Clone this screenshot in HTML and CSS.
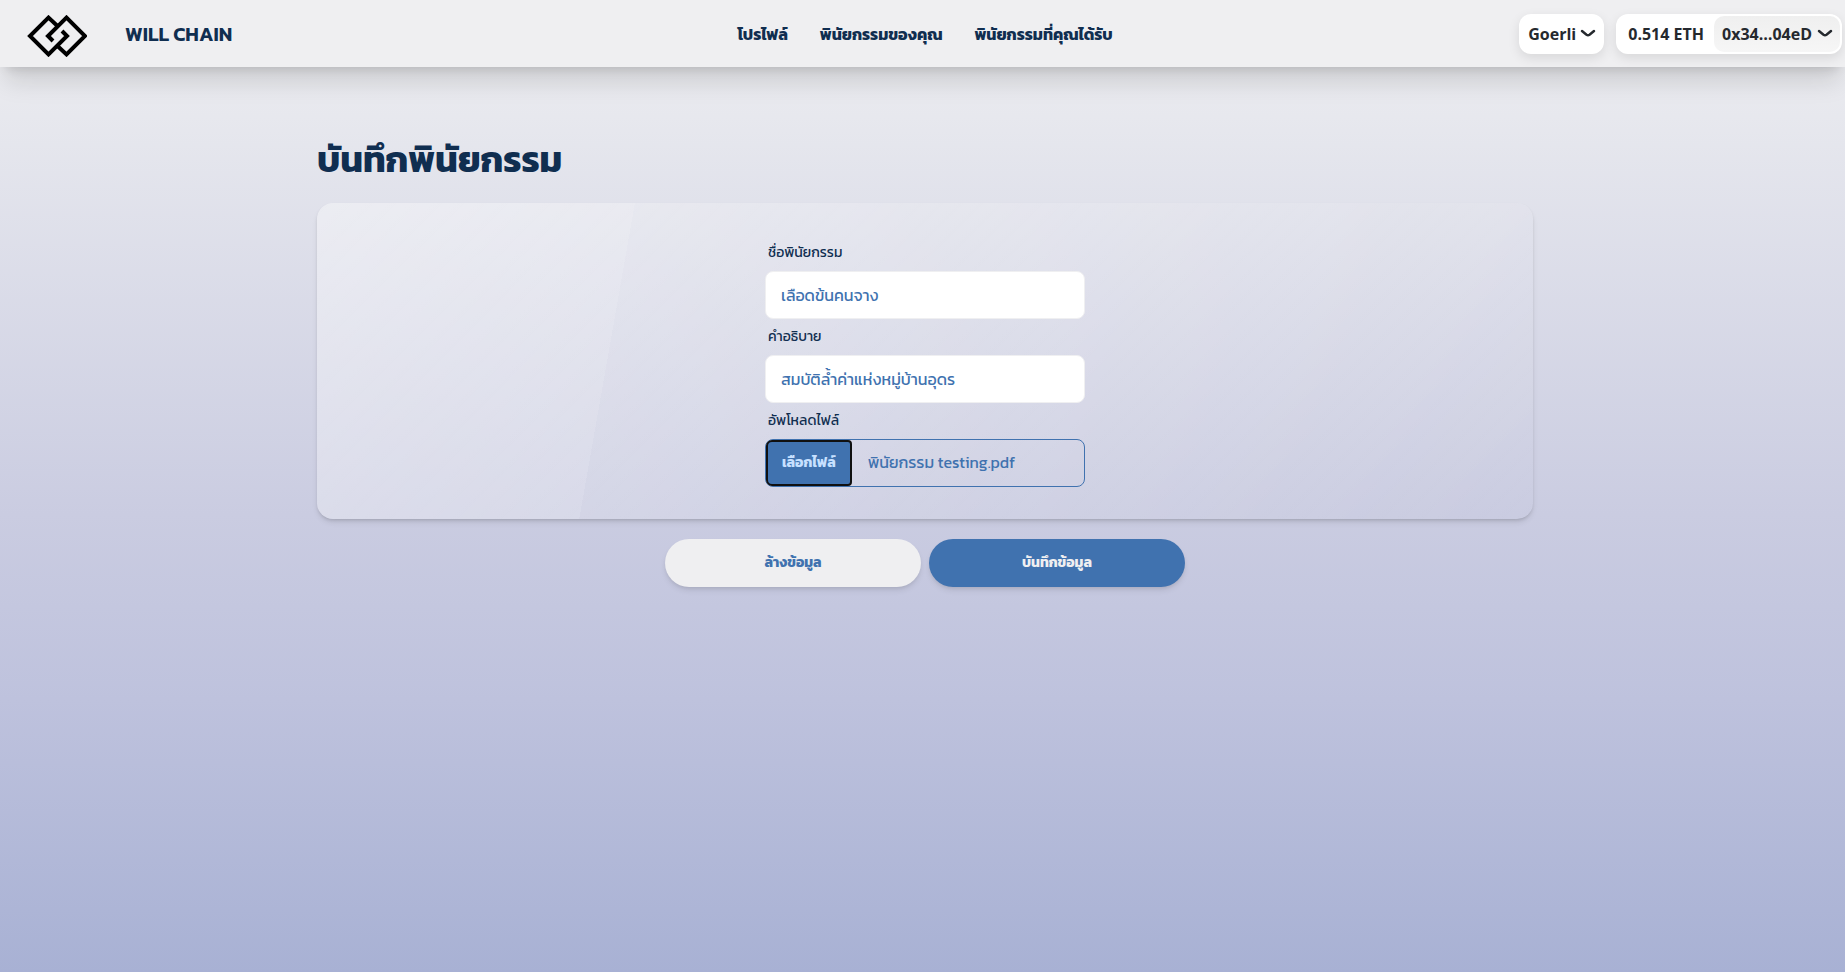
FILE: index.html
```html
<!DOCTYPE html>
<html lang="th">
<head>
<meta charset="utf-8">
<meta name="viewport" content="width=device-width, initial-scale=1">
<title>WILL CHAIN</title>
<link rel="stylesheet" href="styles.css">
</head>
<body>
<header class="navbar">
  <a class="brand" href="#">
    <svg class="logo" viewBox="0 0 60 42" aria-hidden="true">
      <path d="M31 11.5 21.500 2.600 3 21 21.500 39.400 40 21 35 16"/>
      <path d="M30 30.500 39.500 39.400 58 21 39.500 2.600 21 21 26 26"/>
    </svg>
    <span class="brand-name">WILL CHAIN</span>
  </a>
  <nav class="menu">
    <a href="#">โปรไฟล์</a>
    <a href="#">พินัยกรรมของคุณ</a>
    <a href="#">พินัยกรรมที่คุณได้รับ</a>
  </nav>
  <div class="wallet">
    <button class="pill chain" type="button">Goerli
      <svg class="chevron" viewBox="0 0 14 7" aria-hidden="true"><path d="M1 1 5.500 4.700Q7 5.700 8.500 4.700L13 1"/></svg>
    </button>
    <div class="pill account">
      <span class="balance">0.514 ETH</span>
      <button class="address" type="button">0x34…04eD
        <svg class="chevron" viewBox="0 0 14 7" aria-hidden="true"><path d="M1 1 5.500 4.700Q7 5.700 8.500 4.700L13 1"/></svg>
      </button>
    </div>
  </div>
</header>
<main class="page">
  <h1>บันทึกพินัยกรรม</h1>
  <form>
    <div class="card">
      <div class="fields">
        <label for="name">ชื่อพินัยกรรม</label>
        <input class="text" id="name" type="text" value="เลือดข้นคนจาง">
        <label for="description">คำอธิบาย</label>
        <input class="text" id="description" type="text" value="สมบัติล้ำค่าแห่งหมู่บ้านอุดร">
        <label for="file">อัพโหลดไฟล์</label>
        <div class="file">
          <input class="file-input" id="file" type="file">
          <button class="file-button" type="button">เลือกไฟล์</button>
          <span class="file-name">พินัยกรรม testing.pdf</span>
        </div>
      </div>
    </div>
    <div class="actions">
      <button class="btn reset" type="reset">ล้างข้อมูล</button>
      <button class="btn save" type="submit">บันทึกข้อมูล</button>
    </div>
  </form>
</main>
</body>
</html>
```
FILE: styles.css
```css
* { box-sizing: border-box; }

body {
  margin: 0;
  min-height: 100vh;
  background: linear-gradient(#efeff0 0%, #e7e8ee 12%, #cacce1 53%, #bec2dd 72%, #a8b1d4 100%);
  color: #102e50;
  font-family: Kanit, "Noto Sans Thai", "Noto Sans", sans-serif;
  font-size: 14px;
}

a { color: inherit; text-decoration: none; }
button, input { font: inherit; }
button { cursor: pointer; }

.navbar {
  display: grid;
  grid-template-columns: 1fr auto 1fr;
  align-items: center;
  height: 67px;
  padding-left: 5px;
  background: #efeff1;
  box-shadow: 0 20px 25px -5px rgb(0 0 0 / 12%), 0 8px 10px -6px rgb(0 0 0 / 12%);
}

.brand { display: flex; align-items: center; gap: 38px; padding: 4px 0 0 22px; }
.logo { width: 60px; height: 42px; fill: none; stroke: #000; stroke-width: 4; }
.brand-name { padding-bottom: 4px; font-size: 20px; font-weight: 600; }

.menu { display: flex; gap: 32px; font-size: 16px; font-weight: 700; }

.wallet {
  display: flex;
  justify-content: flex-end;
  gap: 12px;
  padding-right: 3px;
  color: #25292e;
  font-family: "Open Sans", "Noto Sans", sans-serif;
  font-size: 16px;
  font-weight: 700;
  white-space: nowrap;
}
.pill {
  display: flex;
  align-items: center;
  height: 40px;
  border: 0;
  border-radius: 12px;
  background: #fff;
  box-shadow: 0 4px 12px rgb(0 0 0 / 10%);
  color: inherit;
}
.chain { gap: 5px; padding: 0 9px; }
.account { padding: 2px; }
.balance { padding: 0 10px; }
.address {
  display: flex;
  align-items: center;
  gap: 6px;
  height: 36px;
  padding: 0 8px;
  border: 0;
  border-radius: 10px;
  background: linear-gradient(#efefef, #f6f6f6);
  color: inherit;
}
.chevron { width: 14px; height: 7px; fill: none; stroke: currentColor; stroke-width: 2.5; stroke-linecap: round; overflow: visible; }

.page { width: 100%; max-width: 1285px; margin: 0 auto; padding: 64px 32px 64px 37px; }
h1 { margin: 0 0 16px; font-size: 36px; font-weight: 700; line-height: 56px; }

.card {
  display: flex;
  justify-content: center;
  padding: 32px;
  border-radius: 16px;
  background-image:
    linear-gradient(135deg, rgb(255 255 255 / 30%), transparent),
    linear-gradient(100deg, rgb(255 255 255 / 10%) 25%, transparent 25%);
  box-shadow: 0 4px 6px -1px rgb(0 0 0 / 10%), 0 2px 4px -2px rgb(0 0 0 / 20%);
}
.fields { display: flex; flex-direction: column; width: 320px; }
.fields label { height: 36px; padding: 0 3px; font-size: 14px; line-height: 36px; }
.text {
  width: 100%;
  height: 48px;
  padding: 0 15px;
  border: 1px solid #efeff1;
  border-radius: 8px;
  background: #fff;
  color: #4072af;
  font-size: 16px;
}
.file {
  display: flex;
  align-items: center;
  height: 48px;
  border: 1px solid #4072af;
  border-radius: 8px;
  color: #4072af;
}
.file-input { position: absolute; width: 1px; height: 1px; opacity: 0; }
.file-button {
  height: 46px;
  padding: 0 14px 2px;
  border: 2px solid #101010;
  border-radius: 6px 4px 4px 6px;
  background: #4072af;
  color: #c7e0ff;
  font-size: 14px;
  font-weight: 700;
}
.file-name { padding: 0 16px 3px; font-size: 16px; white-space: nowrap; }

.actions { display: flex; justify-content: center; gap: 8px; padding-top: 20px; }
.btn {
  width: 256px;
  height: 48px;
  padding: 0 0 2px;
  border: 0;
  border-radius: 24px;
  box-shadow: 0 4px 6px -1px rgb(0 0 0 / 10%), 0 2px 4px -2px rgb(0 0 0 / 10%);
  font-size: 14px;
  font-weight: 700;
}
.reset { background: #efeff1; color: #4072af; }
.save { background: #4072af; color: #efeff1; }
```
